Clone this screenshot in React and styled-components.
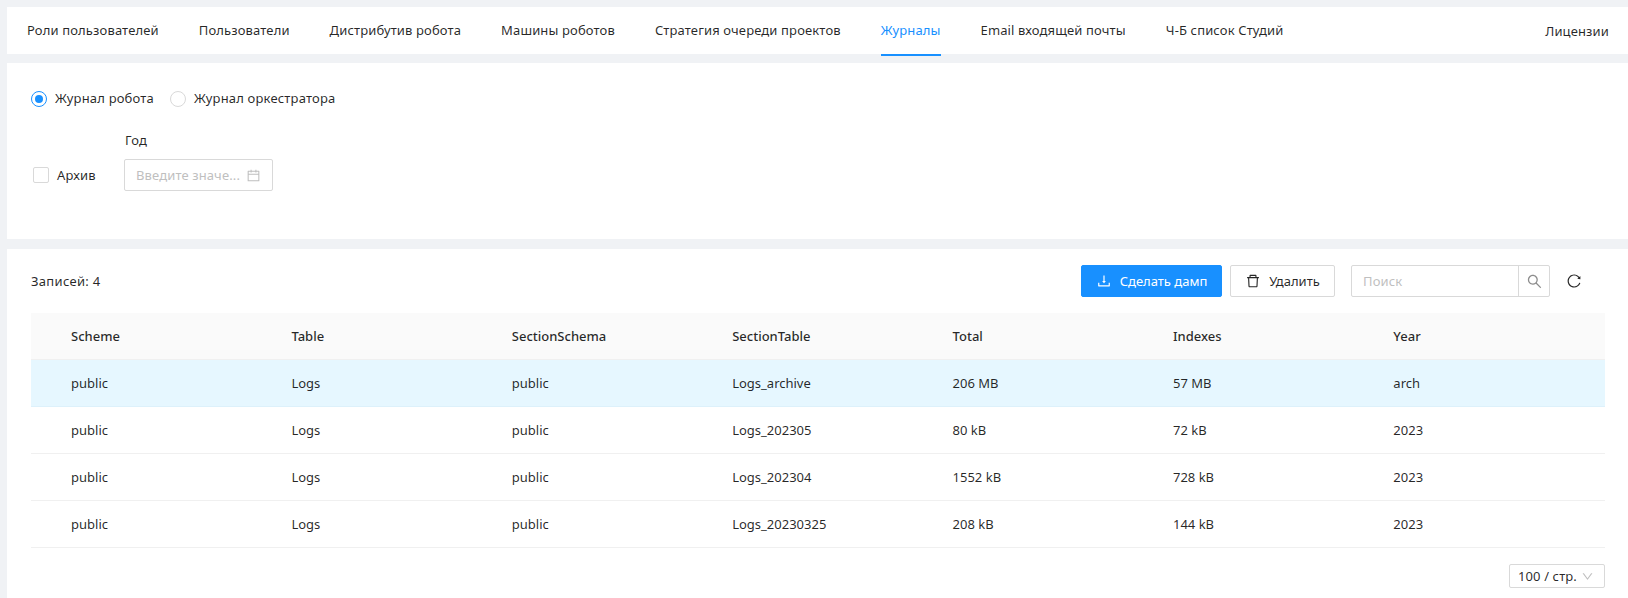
import React from "react";
import styled, { createGlobalStyle } from "styled-components";
import {
  AiOutlineCalendar,
  AiOutlineDelete,
  AiOutlineDown,
  AiOutlineDownload,
  AiOutlineReload,
  AiOutlineSearch,
} from "react-icons/ai";

const tabs = [
  "Роли пользователей",
  "Пользователи",
  "Дистрибутив робота",
  "Машины роботов",
  "Стратегия очереди проектов",
  "Журналы",
  "Email входящей почты",
  "Ч-Б список Студий",
];

const columns = ["Scheme", "Table", "SectionSchema", "SectionTable", "Total", "Indexes", "Year"];

const rows = [
  ["public", "Logs", "public", "Logs_archive", "206 MB", "57 MB", "arch"],
  ["public", "Logs", "public", "Logs_202305", "80 kB", "72 kB", "2023"],
  ["public", "Logs", "public", "Logs_202304", "1552 kB", "728 kB", "2023"],
  ["public", "Logs", "public", "Logs_20230325", "208 kB", "144 kB", "2023"],
];

function App() {
  return (
    <Page>
      <GlobalStyle />
      <Nav>
        {tabs.map((tab) => (
          <Tab key={tab} $active={tab === "Журналы"}>
            {tab}
          </Tab>
        ))}
        <NavRight>Лицензии</NavRight>
      </Nav>

      <FilterPanel>
        <RadioRow>
          <RadioLabel>
            <Radio $checked />
            <RadioText>Журнал робота</RadioText>
          </RadioLabel>
          <RadioLabel>
            <Radio />
            <RadioText>Журнал оркестратора</RadioText>
          </RadioLabel>
        </RadioRow>
        <FilterRow>
          <ArchiveLabel>
            <Checkbox />
            Архив
          </ArchiveLabel>
          <Field>
            <FieldLabel>Год</FieldLabel>
            <DateInput>
              <Placeholder>Введите значе...</Placeholder>
              <AiOutlineCalendar size={15} color="#bfbfbf" />
            </DateInput>
          </Field>
        </FilterRow>
      </FilterPanel>

      <TablePanel>
        <Toolbar>
          <Count>Записей: 4</Count>
          <Actions>
            <Button $primary>
              <AiOutlineDownload size={16} />
              Сделать дамп
            </Button>
            <Button>
              <AiOutlineDelete size={16} />
              Удалить
            </Button>
            <Search>
              <SearchText>Поиск</SearchText>
              <SearchButton>
                <AiOutlineSearch size={17} color="#8c8c8c" />
              </SearchButton>
            </Search>
            <Reload>
              <AiOutlineReload size={16} />
            </Reload>
          </Actions>
        </Toolbar>

        <Table>
          <HeadRow>
            {columns.map((column) => (
              <Cell key={column}>{column}</Cell>
            ))}
          </HeadRow>
          {rows.map((row, index) => (
            <Row key={index} $selected={index === 0}>
              {row.map((value, i) => (
                <Cell key={i}>{value}</Cell>
              ))}
            </Row>
          ))}
        </Table>

        <Footer>
          <PageSize>
            100 / стр.
            <AiOutlineDown size={13} color="#bfbfbf" />
          </PageSize>
        </Footer>
      </TablePanel>
    </Page>
  );
}

export default App;

const GlobalStyle = createGlobalStyle`
  html, body {
    margin: 0;
    height: 598px;
    overflow: hidden;
    background: #f0f2f5;
  }

  * {
    box-sizing: border-box;
  }
`;

const Page = styled.div`
  height: 598px;
  padding: 7px 0 0 7px;
  display: flex;
  flex-direction: column;
  font-family: "Noto Sans", "Liberation Sans", sans-serif;
  font-size: 13px;
  letter-spacing: 0.12px;
  color: rgba(0, 0, 0, 0.85);
`;

const Nav = styled.div`
  height: 47px;
  flex: none;
  display: flex;
  background: #fff;
  padding: 0 19px 0 20px;
  letter-spacing: 0.135px;
`;

const Tab = styled.div`
  height: 49px;
  margin-right: 40px;
  display: flex;
  align-items: center;
  padding-bottom: 1px;
  color: ${(props) => (props.$active ? "#1890ff" : "rgba(0, 0, 0, 0.85)")};
  border-bottom: 2px solid ${(props) => (props.$active ? "#1890ff" : "transparent")};
`;

const NavRight = styled.div`
  margin-left: auto;
  display: flex;
  align-items: center;
`;

const FilterPanel = styled.div`
  height: 176px;
  flex: none;
  margin-top: 9px;
  background: #fff;
  padding: 28px 0 0 24px;
`;

const RadioRow = styled.div`
  display: flex;
  gap: 16px;
  letter-spacing: 0.18px;
`;

const RadioLabel = styled.label`
  display: flex;
  align-items: center;
  gap: 8px;
  height: 16px;
`;

const RadioText = styled.span`
  margin-top: -2px;
`;

const Radio = styled.span`
  width: 16px;
  height: 16px;
  border-radius: 50%;
  border: 1px solid ${(props) => (props.$checked ? "#1890ff" : "#d9d9d9")};
  display: flex;
  align-items: center;
  justify-content: center;

  &::after {
    content: "";
    width: 8px;
    height: 8px;
    border-radius: 50%;
    background: ${(props) => (props.$checked ? "#1890ff" : "transparent")};
  }
`;

const FilterRow = styled.div`
  display: flex;
  align-items: flex-end;
  margin-top: 23px;
`;

const ArchiveLabel = styled.label`
  height: 32px;
  width: 93px;
  padding-left: 2px;
  display: flex;
  align-items: center;
  gap: 8px;
`;

const Checkbox = styled.span`
  width: 16px;
  height: 16px;
  border: 1px solid #d9d9d9;
  border-radius: 2px;
`;

const Field = styled.div`
  display: flex;
  flex-direction: column;
  gap: 9px;
`;

const FieldLabel = styled.div`
  line-height: 20px;
  padding-left: 1px;
`;

const DateInput = styled.div`
  width: 149px;
  height: 32px;
  border: 1px solid #d9d9d9;
  border-radius: 2px;
  padding: 0 11px;
  display: flex;
  align-items: center;
  justify-content: space-between;
`;

const Placeholder = styled.span`
  color: #bfbfbf;
`;

const TablePanel = styled.div`
  flex: 1;
  margin-top: 10px;
  background: #fff;
  padding: 16px 23px 0 24px;
`;

const Toolbar = styled.div`
  height: 32px;
  display: flex;
  align-items: center;
  justify-content: space-between;
`;

const Count = styled.span`
  letter-spacing: 0.3px;
`;

const Actions = styled.div`
  display: flex;
  align-items: center;
`;

const Button = styled.div`
  height: 32px;
  width: ${(props) => (props.$primary ? "141px" : "105px")};
  margin-right: ${(props) => (props.$primary ? "8px" : "16px")};
  display: flex;
  align-items: center;
  justify-content: center;
  gap: 8px;
  letter-spacing: 0;
  border-radius: 2px;
  border: 1px solid ${(props) => (props.$primary ? "#1890ff" : "#d9d9d9")};
  background: ${(props) => (props.$primary ? "#1890ff" : "#fff")};
  color: ${(props) => (props.$primary ? "#fff" : "rgba(0, 0, 0, 0.85)")};
`;

const Search = styled.div`
  width: 199px;
  height: 32px;
  display: flex;
  align-items: center;
  border: 1px solid #d9d9d9;
  border-radius: 2px;
`;

const SearchText = styled.span`
  flex: 1;
  padding-left: 11px;
  color: #bfbfbf;
`;

const SearchButton = styled.div`
  width: 31px;
  height: 30px;
  display: flex;
  align-items: center;
  justify-content: center;
  border-left: 1px solid #d9d9d9;
`;

const Reload = styled.div`
  width: 55px;
  padding-right: 7px;
  display: flex;
  justify-content: center;
`;

const Table = styled.div`
  margin-top: 16px;
  letter-spacing: 0;
`;

const Row = styled.div`
  height: 47px;
  display: grid;
  grid-template-columns: repeat(6, 220.4px) 1fr;
  align-items: center;
  padding-left: 40px;
  border-bottom: 1px solid ${(props) => (props.$selected ? "#ddf1fb" : "#f0f0f0")};
  background: ${(props) => (props.$selected ? "#e6f7ff" : "#fff")};
`;

const HeadRow = styled(Row)`
  background: #fafafa;
  font-weight: 500;
`;

const Cell = styled.div`
  white-space: nowrap;
`;

const Footer = styled.div`
  display: flex;
  justify-content: flex-end;
  margin-top: 16px;
`;

const PageSize = styled.div`
  width: 96px;
  height: 24px;
  border: 1px solid #d9d9d9;
  border-radius: 2px;
  padding: 0 10px 0 8px;
  display: flex;
  align-items: center;
  justify-content: space-between;
`;
